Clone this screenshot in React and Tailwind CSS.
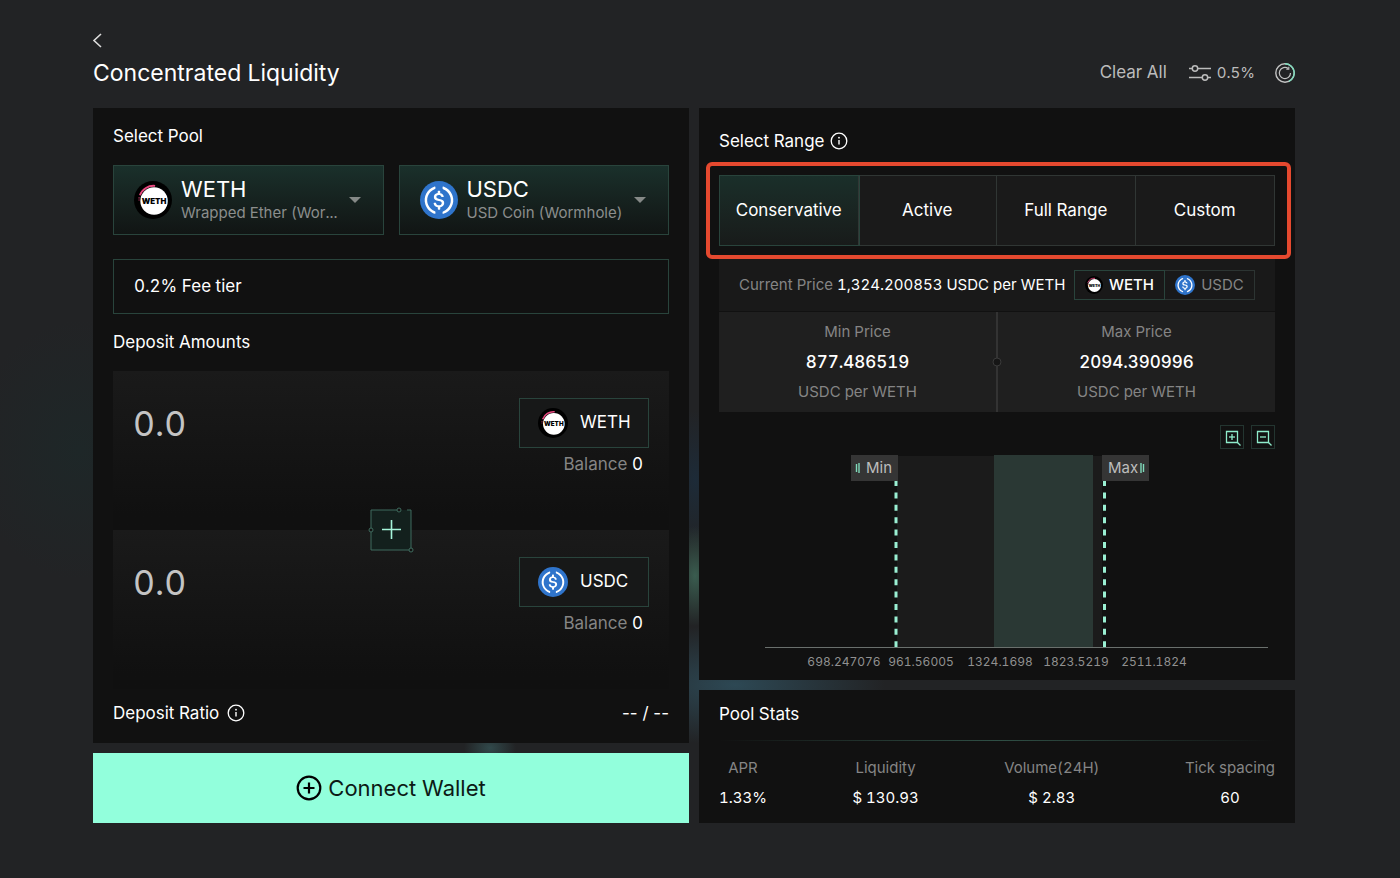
import React, { useState } from 'react';

const RANGES = ['Conservative', 'Active', 'Full Range', 'Custom'];

const STATS = [
  { label: 'APR', value: '1.33%' },
  { label: 'Liquidity', value: '$ 130.93' },
  { label: 'Volume(24H)', value: '$ 2.83' },
  { label: 'Tick spacing', value: '60' },
];

const TICKS = [
  { x: 125, label: '698.247076' },
  { x: 202, label: '961.56005' },
  { x: 281, label: '1324.1698' },
  { x: 357, label: '1823.5219' },
  { x: 435, label: '2511.1824' },
];

function WethLogo({ className }) {
  return (
    <svg viewBox="0 0 36 36" className={className} aria-hidden="true">
      <circle cx="18" cy="18" r="18" fill="#000" />
      <path d="M5.6 13.5A13.8 13.8 0 0 1 20 4.6" fill="none" stroke="#e8487f" strokeWidth="1.8" />
      <path d="M4.8 15.500v4" stroke="#e8487f" strokeWidth="1" strokeDasharray="1 1" />
      <circle cx="19" cy="19" r="13" fill="#fff" />
      <text x="19" y="21.8" textAnchor="middle" fontSize="7.5" fontWeight="900" fill="#000">WETH</text>
    </svg>
  );
}

function UsdcLogo({ className }) {
  return (
    <svg viewBox="0 0 2000 2000" className={className} aria-hidden="true">
      <circle cx="1000" cy="1000" r="1000" fill="#2f74cb" />
      <path
        fill="#fff"
        d="M1275 1158.33c0-145.83-87.5-195.83-262.5-216.66-125-16.67-150-50-150-108.34s41.67-95.83 125-95.83c75 0 116.67 25 137.5 87.5 4.17 12.5 16.67 20.83 29.17 20.83h66.66c16.67 0 29.17-12.5 29.17-29.16v-4.17c-16.67-91.67-91.67-162.5-187.5-170.83v-100c0-16.67-12.5-29.17-33.33-33.34h-62.5c-16.67 0-29.17 12.5-33.34 33.34v95.83c-125 16.67-204.16 100-204.16 204.17 0 137.5 83.33 191.66 258.33 212.5 116.67 20.83 154.17 45.83 154.17 112.5s-58.34 112.5-137.5 112.5c-108.34 0-145.84-45.84-158.34-108.34-4.16-16.66-16.66-25-29.16-25h-70.84c-16.66 0-29.16 12.5-29.16 29.17v4.17c16.66 104.16 83.33 179.16 220.83 200v100c0 16.66 12.5 29.16 33.33 33.33h62.5c16.67 0 29.17-12.5 33.34-33.33v-100c125-20.84 208.33-108.34 208.33-220.84z"
      />
      <path
        fill="#fff"
        d="M787.5 1595.83c-325-116.66-491.67-479.16-370.83-800 62.5-175 200-308.33 370.83-370.83 16.67-8.33 25-20.83 25-41.67V325c0-16.67-8.33-29.17-25-33.33-4.17 0-12.5 0-16.67 4.16-395.83 125-612.5 545.84-487.5 941.67 75 233.33 254.17 412.5 487.5 487.5 16.67 8.33 33.34 0 37.5-16.67 4.17-4.16 4.17-8.33 4.17-16.66v-58.34c0-12.5-12.5-29.16-25-37.5zM1229.17 295.83c-16.67-8.33-33.34 0-37.5 16.67-4.17 4.17-4.17 8.33-4.17 16.67v58.33c0 16.67 12.5 33.33 25 41.67 325 116.66 491.67 479.16 370.83 800-62.5 175-200 308.33-370.83 370.83-16.67 8.33-25 20.83-25 41.67V1700c0 16.67 8.33 29.17 25 33.33 4.17 0 12.5 0 16.67-4.16 395.83-125 612.5-545.84 487.5-941.67-75-237.5-258.34-416.67-487.5-491.67z"
      />
    </svg>
  );
}

function InfoIcon({ className }) {
  return (
    <svg viewBox="0 0 18 18" className={className} fill="none" stroke="currentColor" aria-hidden="true">
      <circle cx="9" cy="9" r="7.8" strokeWidth="1.3" />
      <path d="M9 8v4.6" strokeWidth="1.4" />
      <circle cx="9" cy="5.7" r="0.9" fill="currentColor" stroke="none" />
    </svg>
  );
}

function TokenPicker({ logo, symbol, name }) {
  return (
    <button type="button" aria-haspopup="listbox" className="flex h-[70px] min-w-0 items-center border border-[#29443c] bg-linear-to-b from-[#1a302b] to-[#111514] pl-5 pr-[22px] text-left">
      {logo}
      <span className="ml-[9px] min-w-0 flex-1 whitespace-nowrap">
        <span className="block text-[22px] leading-[26px] text-white">{symbol}</span>
        <span className="block text-[15px] leading-[22px] text-[#8b8e8d]">{name}</span>
      </span>
      <svg viewBox="0 0 12 6" className="h-[6px] w-3 shrink-0" fill="#858987" aria-hidden="true">
        <path d="M0 0h12L6 6z" />
      </svg>
    </button>
  );
}

function DepositRow({ logo, symbol }) {
  const [amount, setAmount] = useState('');
  return (
    <div className="flex h-[159px] items-start bg-linear-to-b from-[#1a1a1a] to-[#101010] to-90% px-5 pt-[27px]">
      <input
        type="text" inputMode="decimal" aria-label={`${symbol} amount`} placeholder="0.0"
        value={amount} onChange={(e) => setAmount(e.target.value)}
        className="h-[50px] min-w-0 flex-1 bg-transparent text-[34px] text-[#c4c4c4] placeholder-[#c4c4c4] outline-none"
      />
      <div>
        <div className="flex h-[50px] w-[130px] items-center gap-3 border border-[#29443c] bg-[#171818] pl-[18px] text-[17px] text-white">
          {logo}
          {symbol}
        </div>
        <p className="mt-1 pr-[6px] text-right text-[17px] leading-6 text-[#858585]">
          Balance <span className="text-white">0</span>
        </p>
      </div>
    </div>
  );
}

function ZoomButton({ label, plus }) {
  return (
    <button type="button" aria-label={label} className="flex h-6 w-6 items-center justify-center border border-[#233530]">
      <svg viewBox="0 0 18 18" className="h-[18px] w-[18px]" fill="none" stroke="#8eeccb" strokeWidth="1.3" aria-hidden="true">
        <path d="M3.500 3.500h11v11h-11z" />
        <path d="M6 9h6" />
        {plus && <path d="M9 6v6" />}
        <path d="M14 14l3.500 3.500" />
      </svg>
    </button>
  );
}

function PriceBound({ title, value }) {
  return (
    <div className="flex flex-1 flex-col items-center pt-2">
      <p className="text-[15px] leading-6 text-[#858585]">{title}</p>
      <p className="mt-[6px] text-[17px] leading-6 font-medium text-white">{value}</p>
      <p className="mt-[6px] text-[15px] leading-6 text-[#858585]">USDC per WETH</p>
    </div>
  );
}

function RangeChart() {
  return (
    <svg viewBox="0 0 556 216" className="mt-[6px] block w-full" role="img" aria-label="Liquidity range">
      <rect x="178" y="1" width="205" height="192" fill="#1b1b1b" />
      <rect x="275" y="0" width="99" height="193" fill="#2a3834" />
      <path d="M46 192.5h503" stroke="#6a706d" strokeWidth="1" />
      <path d="M177 25v167M385.5 25v167" stroke="#9af0d3" strokeWidth="3" strokeDasharray="6 6.4" />

      <rect x="132" y="0" width="47" height="26" fill="#353535" />
      <path d="M137.500 9v8M140 8v10" stroke="#7fd9ba" strokeWidth="1.4" />
      <text x="147" y="18" fontSize="15" fill="#bdbdbd">Min</text>

      <rect x="383" y="0" width="47" height="26" fill="#353535" />
      <text x="389" y="18" fontSize="15" fill="#bdbdbd">Max</text>
      <path d="M422 8v10M424.500 9v8" stroke="#7fd9ba" strokeWidth="1.4" />

      {TICKS.map((t) => (
        <text key={t.label} x={t.x} y="211" fontSize="12" textAnchor="middle" fill="#909090">{t.label}</text>
      ))}
    </svg>
  );
}

export default function App() {
  const [range, setRange] = useState('Conservative');

  return (
    <div className="relative min-h-screen overflow-hidden bg-[#222325] pb-[55px] pl-[93px] pr-[105px] pt-8 font-['Inter',sans-serif] tabular-nums">
      {/* soft aurora that shows through the gaps between cards */}
      <div className="absolute inset-0 bg-[radial-gradient(ellipse_26px_50px_at_695px_576px,#3a5c4f,transparent),radial-gradient(ellipse_150px_60px_at_735px_685px,#2d4854,transparent),radial-gradient(ellipse_30px_70px_at_695px_480px,#1d2b38,transparent),radial-gradient(ellipse_26px_20px_at_490px_748px,#31494b,transparent),radial-gradient(ellipse_110px_130px_at_80px_450px,#1e2728,transparent)]" />

      <div className="relative">
        <header>
          <a href="#pools" aria-label="Back" className="block w-4 text-[#dddddd]">
            <svg viewBox="0 0 16 16" className="-ml-1 h-4 w-4" fill="none" stroke="currentColor" strokeWidth="1.6" aria-hidden="true">
              <path d="M12 2L5 8.500l7 6.500" />
            </svg>
          </a>
          <div className="mt-2 flex h-[34px] items-center justify-between">
            <h1 className="text-[23px] leading-8 text-white">Concentrated Liquidity</h1>
            <div className="flex items-center text-[#bcbcbc]">
              <button type="button" className="text-[17px]">Clear All</button>
              <button type="button" aria-label="Slippage 0.5%" className="ml-[22px] flex items-center gap-[6px] text-[15px]">
                <svg viewBox="0 0 22 16" className="h-4 w-[22px]" fill="none" stroke="currentColor" strokeWidth="1.5" aria-hidden="true">
                  <path d="M0 3.500h3M9 3.500h13M0 12.500h13M19 12.500h3" />
                  <circle cx="6" cy="3.500" r="2.700" />
                  <circle cx="16" cy="12.500" r="2.700" />
                </svg>
                0.5%
              </button>
              <button type="button" aria-label="Refresh" className="ml-5">
                <svg viewBox="0 0 20 20" className="h-5 w-5" fill="none" aria-hidden="true">
                  <circle cx="10" cy="10" r="9.200" stroke="#c4c4c4" strokeWidth="1.400" />
                  <path d="M10 .8A9.200 9.200 0 0 1 14 18.300" stroke="#7fdcbd" strokeWidth="1.400" />
                  <path d="M15.500 10a5.600 5.600 0 1 1-2.300-4.500" stroke="#c4c4c4" strokeWidth="1.200" />
                  <path d="M11.300 6.300h2.500V3.800" stroke="#c4c4c4" strokeWidth="1.100" />
                </svg>
              </button>
            </div>
          </div>
        </header>

        <main className="mt-[18px] grid grid-cols-2 gap-[10px]">
          <div className="flex flex-col gap-[10px]">
            <section className="flex-1 bg-[#111111] px-5 pb-[18px] pt-4">
              <h2 className="text-[17px] leading-6 text-white">Select Pool</h2>
              <div className="mt-[17px] grid grid-cols-2 gap-[15px]">
                <TokenPicker logo={<WethLogo className="h-[38px] w-[38px] shrink-0" />} symbol="WETH" name="Wrapped Ether (Wor..." />
                <TokenPicker logo={<UsdcLogo className="h-[38px] w-[38px] shrink-0" />} symbol="USDC" name="USD Coin (Wormhole)" />
              </div>
              <div className="mt-6 flex h-[55px] items-center border border-[#29443c] px-5 text-[17px] text-white">0.2% Fee tier</div>

              <h2 className="mt-4 text-[17px] leading-6 text-white">Deposit Amounts</h2>
              <div className="relative mt-[17px]">
                <DepositRow logo={<WethLogo className="h-[30px] w-[30px]" />} symbol="WETH" />
                <DepositRow logo={<UsdcLogo className="h-[30px] w-[30px]" />} symbol="USDC" />
                <svg viewBox="0 0 46 46" className="absolute left-1/2 top-1/2 h-[46px] w-[46px] -translate-x-1/2 -translate-y-1/2" fill="none" aria-hidden="true">
                  <path d="M3 3h40v40H3z" fill="#13201d" />
                  <path d="M29 3H3v40h40V3h-4" stroke="#3f6b5e" />
                  <g fill="#111" stroke="#3f6b5e">
                    <circle cx="31" cy="3" r="2" />
                    <circle cx="3" cy="23" r="2" />
                    <circle cx="43" cy="43" r="2" />
                  </g>
                  <path d="M14 22.500h19M23.500 13v19" stroke="#a5f5da" strokeWidth="1.600" />
                </svg>
              </div>

              <div className="mt-3 flex items-center justify-between text-[17px] leading-6 text-white">
                <span className="flex items-center gap-2">
                  Deposit Ratio <InfoIcon className="h-[18px] w-[18px]" />
                </span>
                <span className="proportional-nums">-- / --</span>
              </div>
            </section>

            <button type="button" className="flex h-[70px] items-center justify-center gap-[6px] bg-[#92ffdc] text-[22px] text-[#0c1a15]">
              <svg viewBox="0 0 26 26" className="h-[26px] w-[26px]" fill="none" stroke="#000" strokeWidth="2.200" aria-hidden="true">
                <circle cx="13" cy="13" r="11.300" />
                <path d="M13 7.500v11M7.500 13h11" />
              </svg>
              Connect Wallet
            </button>
          </div>

          <div className="flex flex-col gap-[10px]">
            <section className="flex-1 bg-[#111111] px-5 pb-2 pt-[21px]">
              <h2 className="flex items-center gap-[6px] text-[17px] leading-6 text-white">
                Select Range <InfoIcon className="h-[18px] w-[18px]" />
              </h2>

              <div className="-ml-[13px] -mr-4 mt-[9px] rounded-md border-4 border-[#e5492f] py-[9px] pl-[9px] pr-3">
                <div className="grid h-[71px] grid-cols-4 divide-x divide-[#303634] border border-[#303634] bg-[#1a1a1a]">
                  {RANGES.map((r) => (
                    <button
                      key={r} type="button" aria-pressed={range === r} onClick={() => setRange(r)}
                      className={range === r
                        ? 'bg-linear-to-b from-[#1a2f2a] to-[#181b1a] text-[17px] text-white outline outline-[#29443c]'
                        : 'text-[17px] text-white'}
                    >
                      {r}
                    </button>
                  ))}
                </div>
              </div>

              <div className="flex h-[52px] items-center justify-between bg-[#191919] px-5">
                <p className="text-[15px] text-[#858585]">
                  Current Price <span className="text-white">1,324.200853 USDC per WETH</span>
                </p>
                <div className="flex">
                  <button type="button" className="flex h-[30px] w-[91px] items-center justify-center gap-[6px] border border-[#29443c] text-[15px] font-medium text-white">
                    <WethLogo className="h-[18px] w-[18px]" /> WETH
                  </button>
                  <button type="button" className="flex h-[30px] w-[90px] items-center justify-center gap-[6px] border border-l-0 border-[#2c3432] text-[15px] text-[#858585]">
                    <UsdcLogo className="h-5 w-5" /> USDC
                  </button>
                </div>
              </div>

              <div className="flex h-[101px] border-t border-[#111111] bg-[#1f1f1f]">
                <PriceBound title="Min Price" value="877.486519" />
                <div className="relative w-[2px] bg-[#333333]">
                  <span className="absolute left-1/2 top-1/2 h-[9px] w-[9px] -translate-x-1/2 -translate-y-1/2 rounded-full border border-[#3a3a3a] bg-[#161616]" />
                </div>
                <PriceBound title="Max Price" value="2094.390996" />
              </div>

              <div className="mt-[13px] flex justify-end gap-[7px]">
                <ZoomButton label="Zoom in" plus />
                <ZoomButton label="Zoom out" />
              </div>
              <RangeChart />
            </section>

            <section className="h-[133px] bg-[#111111] px-5 pt-3">
              <h2 className="text-[17px] leading-6 text-white">Pool Stats</h2>
              <div className="mt-[14px] h-px bg-linear-to-r from-transparent via-[#2f4f45] to-transparent" />
              <dl className="mt-[15px] flex justify-between text-center text-[15px] leading-6">
                {STATS.map((s) => (
                  <div key={s.label}>
                    <dt className="text-[#858585]">{s.label}</dt>
                    <dd className="mt-[6px] text-white">{s.value}</dd>
                  </div>
                ))}
              </dl>
            </section>
          </div>
        </main>
      </div>
    </div>
  );
}
